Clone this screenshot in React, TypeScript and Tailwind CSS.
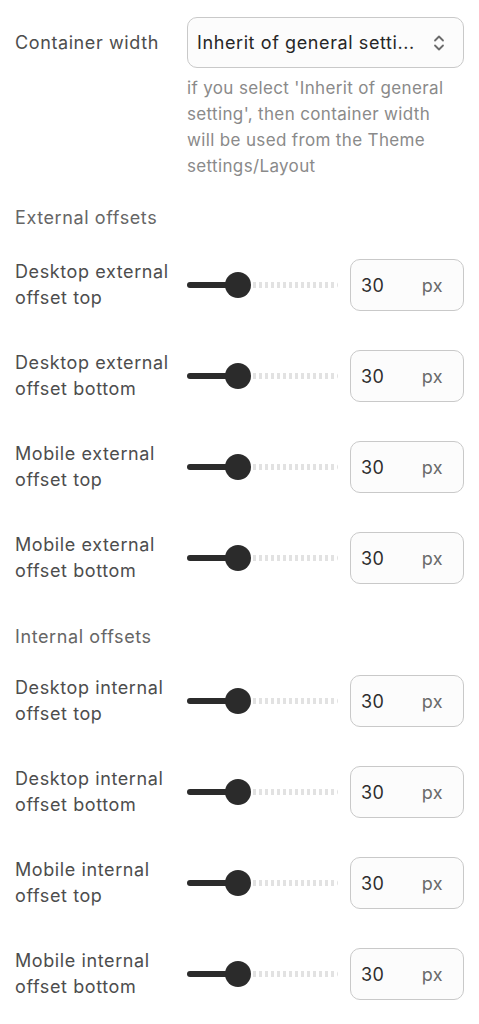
import React from 'react';

interface OffsetRow {
  label: string;
  value: number;
}

const external: OffsetRow[] = [
  { label: 'Desktop external offset top', value: 30 },
  { label: 'Desktop external offset bottom', value: 30 },
  { label: 'Mobile external offset top', value: 30 },
  { label: 'Mobile external offset bottom', value: 30 },
];

const internal: OffsetRow[] = [
  { label: 'Desktop internal offset top', value: 30 },
  { label: 'Desktop internal offset bottom', value: 30 },
  { label: 'Mobile internal offset top', value: 30 },
  { label: 'Mobile internal offset bottom', value: 30 },
];

function Slider() {
  return (
    <div className="flex items-center w-[151px] h-[26px]">
      <div className="w-[44px] h-[6px] rounded-full bg-[#2b2b2b]" />
      <div className="w-[26px] h-[26px] rounded-full bg-[#2b2b2b] -ml-[6px] shrink-0" />
      <div className="flex-1 h-[6px] ml-[2px] rounded-r-full bg-[repeating-linear-gradient(to_right,#e2e2e2_0_3px,transparent_3px_6px)]" />
    </div>
  );
}

function Row({ row }: { row: OffsetRow }) {
  return (
    <div className="grid grid-cols-[172px_1fr] items-center">
      <div className="text-[18px] tracking-[0.6px] leading-[26px] text-[#4d4d4d]">{row.label}</div>
      <div className="flex items-center gap-[12px]">
        <Slider />
        <div className="flex items-center w-[114px] h-[52px] rounded-[10px] border border-[#c9c9c9] bg-[#fcfcfc] pl-[10px] pr-[20px]">
          <span className="text-[18px] tracking-[0.4px] text-[#2e2e2e]">{row.value}</span>
          <span className="ml-auto text-[18px] tracking-[0.4px] text-[#6a6a6a]">px</span>
        </div>
      </div>
    </div>
  );
}

export default function App() {
  return (
    <div className="min-h-screen bg-white px-[15px] pt-[17px] pb-6" style={{ fontFamily: 'Inter, "Liberation Sans", sans-serif' }}>
      <div className="grid grid-cols-[172px_1fr]">
        <div className="flex items-center h-[51px] text-[18px] tracking-[0.6px] text-[#4d4d4d]">Container width</div>
        <div>
          <div className="flex items-center h-[51px] rounded-[10px] border border-[#c9c9c9] bg-[#fcfcfc] pl-[9px] pr-[18px]">
            <span className="text-[18px] tracking-[0.6px] text-[#262626] truncate">Inherit of general setti...</span>
            <svg className="ml-auto shrink-0" width="12" height="18" viewBox="0 0 12 18" fill="none" stroke="#6b6b6b" strokeWidth="1.8" strokeLinecap="round" strokeLinejoin="round">
              <path d="M2 6.5 6 2.5 10 6.5" />
              <path d="M2 11.5 6 15.5 10 11.5" />
            </svg>
          </div>
          <p className="mt-[7px] pr-[14px] text-[17px] tracking-[0.35px] leading-[26px] text-[#8a8a8a]">
            if you select 'Inherit of general setting', then container width will be used from the Theme settings/Layout
          </p>
        </div>
      </div>

      <div className="mt-[26px] text-[18px] tracking-[0.6px] leading-[26px] text-[#666666]">External offsets</div>
      <div className="mt-[28px] flex flex-col gap-[39px]">
        {external.map((r) => (
          <Row key={r.label} row={r} />
        ))}
      </div>

      <div className="mt-[40px] text-[18px] tracking-[0.6px] leading-[26px] text-[#666666]">Internal offsets</div>
      <div className="mt-[25px] flex flex-col gap-[39px]">
        {internal.map((r) => (
          <Row key={r.label} row={r} />
        ))}
      </div>
    </div>
  );
}
